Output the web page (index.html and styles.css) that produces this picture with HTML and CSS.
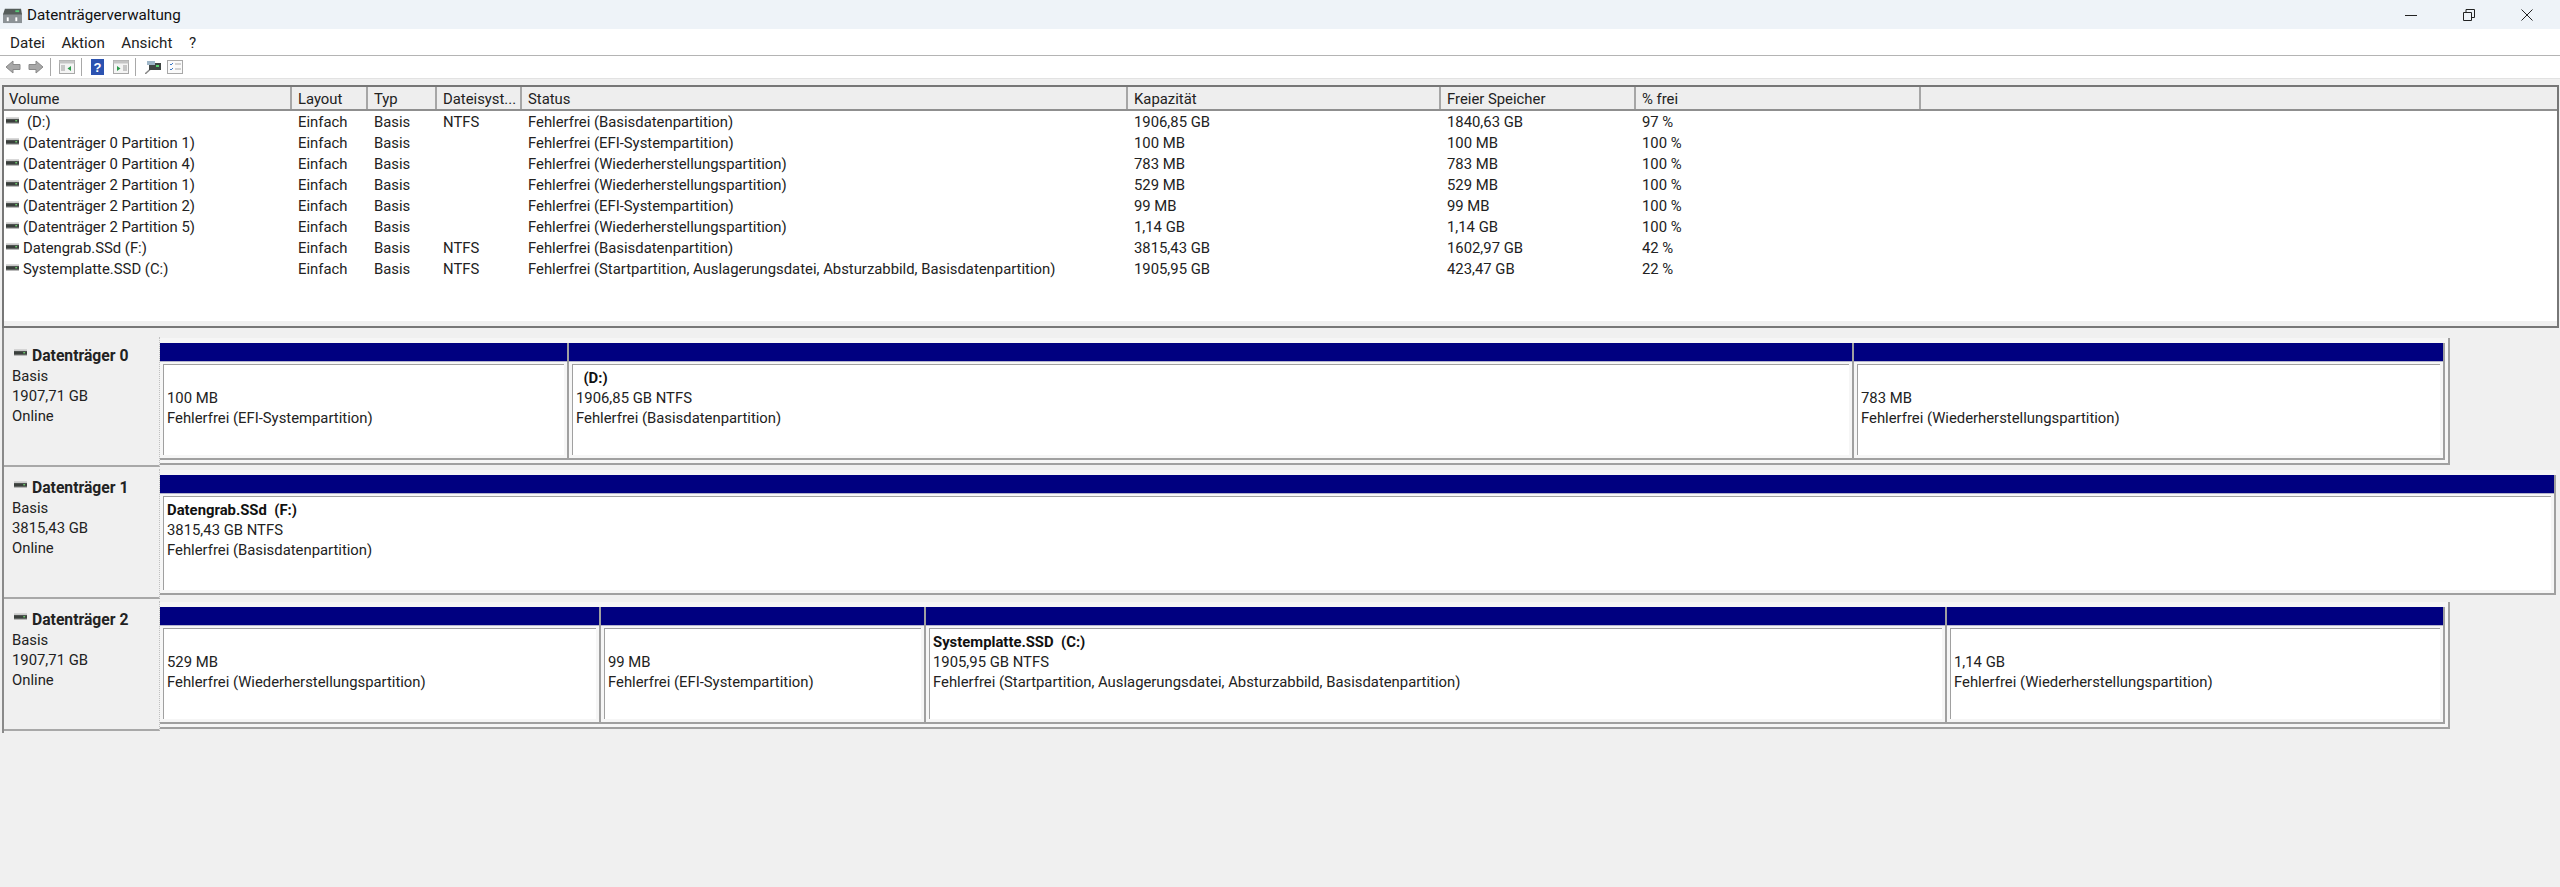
FILE: index.html
```html
<!DOCTYPE html>
<html lang="de">
<head>
<meta charset="utf-8">
<title>Datenträgerverwaltung</title>
<link rel="stylesheet" href="styles.css">
</head>
<body>
<svg class="defs" width="0" height="0" aria-hidden="true">
  <symbol id="disk" viewBox="0 0 14 8">
    <rect x="0" y="0" width="14" height="3" fill="#c9c9c9"/>
    <rect x="0" y="2" width="14" height="4" fill="#3a3f3c"/>
    <rect x="10" y="3" width="2" height="1.4" fill="#6fd06f"/>
    <rect x="0" y="6" width="14" height="1" fill="#a9a9a9"/>
  </symbol>
</svg>
<div class="app">
  <header class="titlebar">
    <svg class="appicon" viewBox="0 0 20 20"><rect x="0" y="9" width="20" height="10" fill="#8c9296"/><path d="M2 4h17l1 6H0z" fill="#555c5a"/><rect x="13" y="5.500" width="4" height="2" fill="#58c878"/><rect x="4" y="13" width="2" height="4" fill="#fff"/><rect x="13" y="13" width="2" height="4" fill="#fff"/></svg>
    <span class="apptitle">Datenträgerverwaltung</span>
    <div class="winctl">
      <svg viewBox="0 0 12 12" class="winbtn"><path d="M0 6.500h12" stroke="#222" fill="none"/></svg>
      <svg viewBox="0 0 12 12" class="winbtn"><path d="M.5 3.500h8v8h-8zM3 3V.5h8.500v8H9" stroke="#222" fill="none"/></svg>
      <svg viewBox="0 0 12 12" class="winbtn"><path d="M.5.5l11 11M11.500.5l-11 11" stroke="#222" fill="none"/></svg>
    </div>
  </header>
  <nav class="menubar">
    <span>Datei</span><span>Aktion</span><span>Ansicht</span><span>?</span>
  </nav>
  <div class="toolbar">
    <svg class="tool arrow a1" viewBox="0 0 16 14"><path d="M8 1L1 7l7 6V9.500h7v-5H8z" fill="#a8a8a8" stroke="#8a8a8a"/></svg>
    <svg class="tool arrow a2" viewBox="0 0 16 14"><path d="M8 1l7 6-7 6V9.500H1v-5h7z" fill="#a8a8a8" stroke="#8a8a8a"/></svg>
    <i class="sep s1"></i>
    <svg class="tool pane" viewBox="0 0 16 14"><rect x=".5" y=".5" width="15" height="13" fill="#f4f4f4" stroke="#a8a8a8"/><rect x=".5" y=".5" width="15" height="3" fill="#c4c4c4"/><path d="M2 6h4M2 8h4M2 10h4" stroke="#999"/><path d="M12 6v5L8.500 8.500z" fill="#2a9a4a"/></svg>
    <i class="sep s2"></i>
    <svg class="tool help" viewBox="0 0 13 16"><rect width="13" height="16" fill="#2b52b0"/><text x="6.500" y="13" text-anchor="middle" class="helpq">?</text></svg>
    <svg class="tool pane p-after" viewBox="0 0 16 14"><rect x=".5" y=".5" width="15" height="13" fill="#f4f4f4" stroke="#a8a8a8"/><rect x=".5" y=".5" width="15" height="3" fill="#c4c4c4"/><path d="M10 6h4M10 8h4M10 10h4" stroke="#999"/><path d="M4 6v5l3.500-2.500z" fill="#2a9a4a"/></svg>
    <i class="sep s2"></i>
    <svg class="tool pane" viewBox="0 0 16 14"><path d="M0 14l5-4.500" stroke="#888" stroke-width="1.500"/><rect x="4" y="3" width="12" height="7" fill="#3f4543"/><rect x="11" y="5" width="3" height="2" fill="#59cf6e"/><rect x="2" y="1" width="8" height="4" fill="#9fb6c8"/></svg>
    <svg class="tool pane p-check" viewBox="0 0 16 14"><rect x=".5" y=".5" width="15" height="13" fill="#fafafa" stroke="#a8a8a8"/><path d="M3 4l1 1 2-2M3 9l1 1 2-2" stroke="#3a78c8" fill="none"/><path d="M8 4h6M8 9h6" stroke="#aaa"/></svg>
  </div>

  <main class="client">
    <section class="list">
      <div class="row head">
        <div class="c c1">Volume</div><div class="c c2">Layout</div><div class="c c3">Typ</div><div class="c c4">Dateisyst...</div><div class="c c5">Status</div><div class="c c6">Kapazität</div><div class="c c7">Freier Speicher</div><div class="c c8">% frei</div><div class="c c9"></div>
      </div>
      <div class="row"><div class="c c1"><svg class="dk"><use href="#disk"/></svg><span class="sp">(D:)</span></div><div class="c c2">Einfach</div><div class="c c3">Basis</div><div class="c c4">NTFS</div><div class="c c5">Fehlerfrei (Basisdatenpartition)</div><div class="c c6">1906,85 GB</div><div class="c c7">1840,63 GB</div><div class="c c8">97 %</div></div>
      <div class="row"><div class="c c1"><svg class="dk"><use href="#disk"/></svg>(Datenträger 0 Partition 1)</div><div class="c c2">Einfach</div><div class="c c3">Basis</div><div class="c c4"></div><div class="c c5">Fehlerfrei (EFI-Systempartition)</div><div class="c c6">100 MB</div><div class="c c7">100 MB</div><div class="c c8">100 %</div></div>
      <div class="row"><div class="c c1"><svg class="dk"><use href="#disk"/></svg>(Datenträger 0 Partition 4)</div><div class="c c2">Einfach</div><div class="c c3">Basis</div><div class="c c4"></div><div class="c c5">Fehlerfrei (Wiederherstellungspartition)</div><div class="c c6">783 MB</div><div class="c c7">783 MB</div><div class="c c8">100 %</div></div>
      <div class="row"><div class="c c1"><svg class="dk"><use href="#disk"/></svg>(Datenträger 2 Partition 1)</div><div class="c c2">Einfach</div><div class="c c3">Basis</div><div class="c c4"></div><div class="c c5">Fehlerfrei (Wiederherstellungspartition)</div><div class="c c6">529 MB</div><div class="c c7">529 MB</div><div class="c c8">100 %</div></div>
      <div class="row"><div class="c c1"><svg class="dk"><use href="#disk"/></svg>(Datenträger 2 Partition 2)</div><div class="c c2">Einfach</div><div class="c c3">Basis</div><div class="c c4"></div><div class="c c5">Fehlerfrei (EFI-Systempartition)</div><div class="c c6">99 MB</div><div class="c c7">99 MB</div><div class="c c8">100 %</div></div>
      <div class="row"><div class="c c1"><svg class="dk"><use href="#disk"/></svg>(Datenträger 2 Partition 5)</div><div class="c c2">Einfach</div><div class="c c3">Basis</div><div class="c c4"></div><div class="c c5">Fehlerfrei (Wiederherstellungspartition)</div><div class="c c6">1,14 GB</div><div class="c c7">1,14 GB</div><div class="c c8">100 %</div></div>
      <div class="row"><div class="c c1"><svg class="dk"><use href="#disk"/></svg>Datengrab.SSd (F:)</div><div class="c c2">Einfach</div><div class="c c3">Basis</div><div class="c c4">NTFS</div><div class="c c5">Fehlerfrei (Basisdatenpartition)</div><div class="c c6">3815,43 GB</div><div class="c c7">1602,97 GB</div><div class="c c8">42 %</div></div>
      <div class="row"><div class="c c1"><svg class="dk"><use href="#disk"/></svg>Systemplatte.SSD (C:)</div><div class="c c2">Einfach</div><div class="c c3">Basis</div><div class="c c4">NTFS</div><div class="c c5">Fehlerfrei (Startpartition, Auslagerungsdatei, Absturzabbild, Basisdatenpartition)</div><div class="c c6">1905,95 GB</div><div class="c c7">423,47 GB</div><div class="c c8">22 %</div></div>
    </section>

    <section class="disks">
      <article class="disk">
        <div class="label"><div class="dname"><svg class="dk dk2"><use href="#disk"/></svg><b>Datenträger 0</b></div><div>Basis</div><div>1907,71 GB</div><div>Online</div></div>
        <div class="map short">
          <div class="part p01"><div class="bar"></div><div class="box"><div class="t">&nbsp;</div><div>100 MB</div><div>Fehlerfrei (EFI-Systempartition)</div></div></div>
          <div class="part p02"><div class="bar"></div><div class="box"><div class="t">&nbsp;&nbsp;(D:)</div><div>1906,85 GB NTFS</div><div>Fehlerfrei (Basisdatenpartition)</div></div></div>
          <div class="part p03"><div class="bar"></div><div class="box"><div class="t">&nbsp;</div><div>783 MB</div><div>Fehlerfrei (Wiederherstellungspartition)</div></div></div>
        </div>
      </article>
      <article class="disk">
        <div class="label"><div class="dname"><svg class="dk dk2"><use href="#disk"/></svg><b>Datenträger 1</b></div><div>Basis</div><div>3815,43 GB</div><div>Online</div></div>
        <div class="map">
          <div class="part p11"><div class="bar"></div><div class="box"><div class="t">Datengrab.SSd&nbsp;&nbsp;(F:)</div><div>3815,43 GB NTFS</div><div>Fehlerfrei (Basisdatenpartition)</div></div></div>
        </div>
      </article>
      <article class="disk">
        <div class="label"><div class="dname"><svg class="dk dk2"><use href="#disk"/></svg><b>Datenträger 2</b></div><div>Basis</div><div>1907,71 GB</div><div>Online</div></div>
        <div class="map short">
          <div class="part p21"><div class="bar"></div><div class="box"><div class="t">&nbsp;</div><div>529 MB</div><div>Fehlerfrei (Wiederherstellungspartition)</div></div></div>
          <div class="part p22"><div class="bar"></div><div class="box"><div class="t">&nbsp;</div><div>99 MB</div><div>Fehlerfrei (EFI-Systempartition)</div></div></div>
          <div class="part p23"><div class="bar"></div><div class="box"><div class="t">Systemplatte.SSD&nbsp;&nbsp;(C:)</div><div>1905,95 GB NTFS</div><div>Fehlerfrei (Startpartition, Auslagerungsdatei, Absturzabbild, Basisdatenpartition)</div></div></div>
          <div class="part p24"><div class="bar"></div><div class="box"><div class="t">&nbsp;</div><div>1,14 GB</div><div>Fehlerfrei (Wiederherstellungspartition)</div></div></div>
        </div>
      </article>
    </section>
  </main>
</div>
</body>
</html>
```
FILE: styles.css
```css
* { box-sizing: border-box; }
html, body { margin: 0; padding: 0; height: 100%; overflow: hidden; }
body { font: 14.850px/20px Roboto, "Noto Sans", sans-serif; color: #222; background: #f0f0f0; }
.defs { position: absolute; }
.app { display: flex; flex-direction: column; height: 887px; }

.titlebar { display: flex; align-items: center; height: 29px; background: #eef3f8; padding-left: 3px; }
.appicon { width: 19px; height: 19px; flex: none; }
.apptitle { margin-left: 5px; font-size: 15.200px; color: #111; }
.winctl { margin-left: auto; display: flex; gap: 46px; padding-right: 27px; }
.winbtn { width: 12px; height: 12px; }

.menubar { display: flex; height: 27px; align-items: center; padding: 1px 0 0 10px; gap: 16.500px; background: #fff; border-bottom: 1px solid #b4b4b4; font-size: 15.200px; }

.toolbar { display: flex; align-items: center; height: 23px; padding-left: 5px; background: #fff; border-bottom: 1px solid #e2e2e2; }
.tool { flex: none; }
.arrow { width: 16px; height: 14px; }
.a1 { margin-right: 7px; }
.a2 { margin-right: 6px; }
.pane { width: 16px; height: 14px; }
.help { width: 13px; height: 16px; }
.helpq { font: bold 13px "Liberation Sans", sans-serif; fill: #fff; }
.sep { width: 1px; height: 18px; background: #a8a8a8; flex: none; }
.s1 { margin-right: 8px; }
.s2 { margin: 0 9px 0 6px; }
.p-after { margin-left: 9px; }
.p-check { margin-left: 6px; }

.client { flex: 1; display: flex; flex-direction: column; padding: 6px 1px 0 2px; background: #f0f0f0; }

.list { height: 243px; flex: none; background: #fff; border: 2px solid #777; box-shadow: inset 0 -5px 0 #f0f0f0; }
.row { display: flex; height: 21px; align-items: center; white-space: nowrap; }
.row.head { height: 24px; background: #eeeeee; border-bottom: 2px solid #8f8f8f; }
.c { flex: none; padding-left: 6px; overflow: hidden; }
.head .c { border-right: 2px solid #a6a6a6; height: 22px; line-height: 24px; }
.head .c9 { flex: 1; border-right: 0; }
.c1 { width: 288px; }
.c2 { width: 76px; }
.c3 { width: 69px; }
.c4 { width: 85px; }
.c5 { width: 606px; }
.c6 { width: 313px; }
.c7 { width: 195px; }
.c8 { width: 285px; }
.dk { width: 13px; height: 8px; margin: 0 4px 0 0; vertical-align: 2px; }
.row .c1 { padding-left: 2px; }
.head .c1 { padding-left: 5px; }
.sp { margin-left: 4px; }

.disks { flex: none; padding-top: 9px; border-left: 2px solid #8a8a8a; }
.disk { display: flex; height: 132px; }
.label { width: 156px; flex: none; height: 130px; padding: 9px 0 0 8px; border-bottom: 2px solid #a8a8a8; border-right: 1px dotted #c0c0c0; }
.dname { height: 20px; white-space: nowrap; }
.dname b { font-size: 15.700px; }
.dk2 { margin: 0 5px 0 2px; vertical-align: 4px; width: 13px; height: 8px; }
.map { display: flex; width: 2396px; height: 125px; margin-top: 1px; padding: 5px 0 0; background: #f6f6f6; }
.map.short { width: 2290px; height: 127px; padding: 5px 3px 3px 0; border-right: 2px solid #a0a0a0; border-bottom: 2px solid #a0a0a0; }
.part { display: flex; flex-direction: column; flex: none; padding-bottom: 3px; border-right: 2px solid #a0a0a0; border-bottom: 2px solid #a0a0a0; }
.p01 { width: 409px; }
.p02 { width: 1285px; }
.p03 { flex: 1; }
.p11 { flex: 1; }
.p21 { width: 441px; }
.p22 { width: 325px; }
.p23 { width: 1021px; }
.p24 { flex: 1; }
.bar { height: 18px; background: #000080; flex: none; box-shadow: 0 1px 0 #b4b4cc; }
.box { flex: 1; margin: 3px 3px 0 3px; padding: 3px 0 0 3px; background: #fff; border-left: 1px solid #a0a0a0; border-top: 1px solid #a0a0a0; white-space: nowrap; }
.t { font-weight: 700; color: #111; height: 20px; }
```
